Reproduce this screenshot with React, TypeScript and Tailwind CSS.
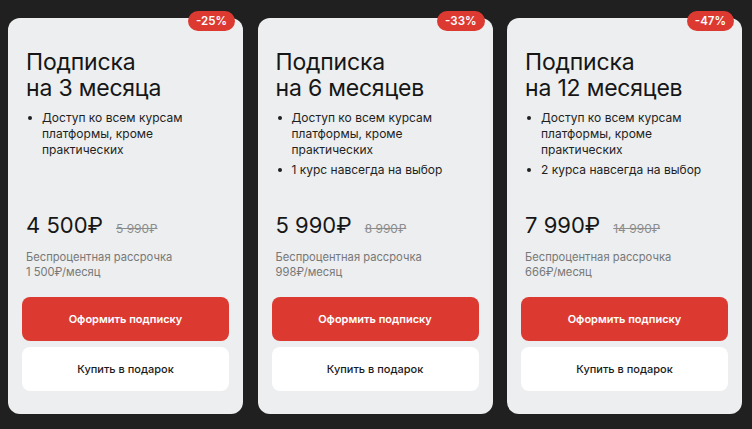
const plans = [
  {
    months: 'на 3 месяца',
    discount: '-25%',
    features: ['Доступ ко всем курсам платформы, кроме практических'],
    price: '4 500₽',
    oldPrice: '5 990₽',
    monthly: '1 500₽/месяц',
  },
  {
    months: 'на 6 месяцев',
    discount: '-33%',
    features: ['Доступ ко всем курсам платформы, кроме практических', '1 курс навсегда на выбор'],
    price: '5 990₽',
    oldPrice: '8 990₽',
    monthly: '998₽/месяц',
  },
  {
    months: 'на 12 месяцев',
    discount: '-47%',
    features: ['Доступ ко всем курсам платформы, кроме практических', '2 курса навсегда на выбор'],
    price: '7 990₽',
    oldPrice: '14 990₽',
    monthly: '666₽/месяц',
  },
];

function PlanCard({ plan }: { plan: (typeof plans)[number] }) {
  return (
    <div className="relative w-[235px] h-[396px] shrink-0 bg-[#eceeef] rounded-[12px] flex flex-col pt-[31px] pb-[23px] px-[14px]">
      <span className="absolute -top-[7px] right-[8px] h-[20px] px-[8px] rounded-full bg-[#dc3a31] text-white text-[11.5px] font-semibold leading-[20px]">
        {plan.discount}
      </span>

      <div className="px-[4px]">
        <h2 className="text-[23px] leading-[26px] font-normal text-[#161616] tracking-[-0.2px]">
          Подписка
          <br />
          {plan.months}
        </h2>

        <ul className="mt-[9px] space-y-[4px] pr-[12px]">
          {plan.features.map(f => (
            <li key={f} className="flex gap-[10px] text-[12px] leading-[16px] text-[#1f1f1f]">
              <span className="mt-[6px] ml-[2px] w-[4px] h-[4px] rounded-full bg-[#1f1f1f] shrink-0" />
              <span>{f}</span>
            </li>
          ))}
        </ul>
      </div>

      <div className="mt-auto px-[4px]">
        <div className="flex items-baseline gap-[13px]">
          <span className="text-[22px] leading-[28px] text-[#161616]">{plan.price}</span>
          <span className="text-[12px] text-[#8c8c8c] line-through">{plan.oldPrice}</span>
        </div>
        <p className="mt-[11px] text-[11.2px] leading-[14.3px] text-[#787878]">
          Беспроцентная рассрочка
          <br />
          {plan.monthly}
        </p>
      </div>

      <button className="mt-[18px] h-[44px] rounded-[8px] bg-[#dc3a31] text-white text-[11px] font-semibold">
        Оформить подписку
      </button>
      <button className="mt-[6px] h-[44px] rounded-[8px] bg-white text-[#1a1a1a] text-[11px] font-medium">
        Купить в подарок
      </button>
    </div>
  );
}

export default function App() {
  return (
    <div className="w-[752px] h-[429px] bg-[#202020] pt-[18px] pl-[8px] flex gap-[14.5px] font-['Inter',sans-serif]">
      {plans.map(p => (
        <PlanCard key={p.discount} plan={p} />
      ))}
    </div>
  );
}
